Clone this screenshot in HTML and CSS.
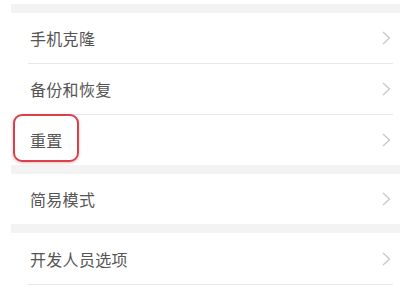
FILE: index.html
```html
<!DOCTYPE html>
<html lang="zh-CN">
<head>
<meta charset="utf-8">
<link rel="stylesheet" href="styles.css">
</head>
<body>
<div class="page">
  <div class="gap"></div>
  <div class="group">
    <div class="row line"><span class="label">手机克隆</span><svg class="chev" width="9" height="14" viewBox="0 0 9 14"><path d="M1 1 L7.5 7 L1 13" fill="none" stroke="#c8c8c8" stroke-width="1.3"/></svg></div>
    <div class="row line"><span class="label">备份和恢复</span><svg class="chev" width="9" height="14" viewBox="0 0 9 14"><path d="M1 1 L7.5 7 L1 13" fill="none" stroke="#c8c8c8" stroke-width="1.3"/></svg></div>
    <div class="row hl"><span class="label">重置</span><svg class="chev" width="9" height="14" viewBox="0 0 9 14"><path d="M1 1 L7.5 7 L1 13" fill="none" stroke="#c8c8c8" stroke-width="1.3"/></svg><span class="mark"></span></div>
  </div>
  <div class="gap"></div>
  <div class="group">
    <div class="row"><span class="label">简易模式</span><svg class="chev" width="9" height="14" viewBox="0 0 9 14"><path d="M1 1 L7.5 7 L1 13" fill="none" stroke="#c8c8c8" stroke-width="1.3"/></svg></div>
  </div>
  <div class="gap"></div>
  <div class="group">
    <div class="row line tall"><span class="label">开发人员选项</span><svg class="chev" width="9" height="14" viewBox="0 0 9 14"><path d="M1 1 L7.5 7 L1 13" fill="none" stroke="#c8c8c8" stroke-width="1.3"/></svg></div>
  </div>
</div>
</body>
</html>
```
FILE: styles.css
```css
html, body {
  margin: 0;
  padding: 0;
  background: #ffffff;
  width: 400px;
  height: 300px;
  overflow: hidden;
}
.page {
  padding-top: 4px;
  padding-left: 11px;
  font-family: "Noto Sans CJK SC", "Noto Sans", sans-serif;
}
.gap {
  height: 9px;
  background: #f3f3f3;
}
.group {
  background: #ffffff;
}
.row {
  position: relative;
  display: flex;
  align-items: center;
  justify-content: space-between;
  height: 50px;
  margin-left: 17px;
  margin-right: 7px;
  padding-left: 2px;
  padding-right: 2px;
}
.row.line {
  border-bottom: 1px solid #e8e8e8;
}
.row.tall {
  height: 51px;
}
.label {
  font-size: 16px;
  color: #555555;
  letter-spacing: 0.3px;
}
.chev {
  display: block;
}
.mark {
  position: absolute;
  left: -15px;
  top: -1px;
  width: 62px;
  height: 44px;
  border: 2.5px solid #d8404a;
  border-radius: 9px;
  box-shadow: 0 1px 3px rgba(200, 60, 70, 0.35);
}
```
